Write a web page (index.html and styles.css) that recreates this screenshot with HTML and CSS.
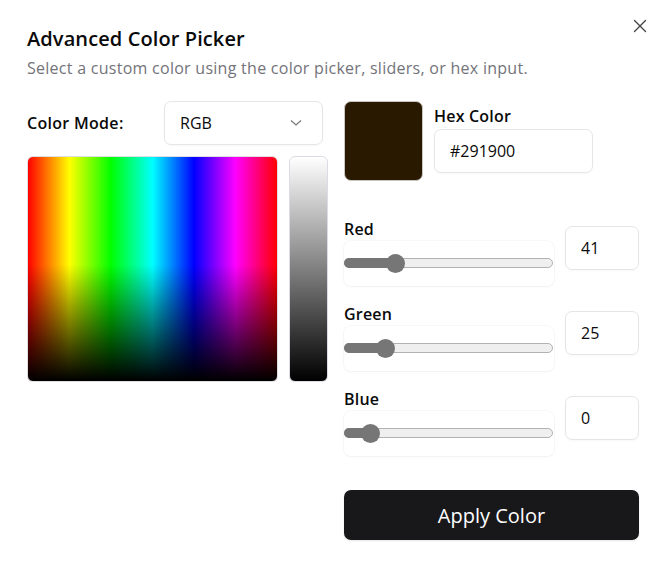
FILE: index.html
```html
<!DOCTYPE html>
<html>
<head>
<meta charset="utf-8">
<link rel="stylesheet" href="styles.css">
</head>
<body>
<div class="dialog">
  <button class="close" aria-label="Close">
    <svg width="14" height="14" viewBox="0 0 14 14"><path d="M1.5 1.5 L12.5 12.5 M12.5 1.5 L1.5 12.5" stroke="#444" stroke-width="1.4" fill="none" stroke-linecap="round"/></svg>
  </button>
  <h1 class="title">Advanced Color Picker</h1>
  <p class="subtitle">Select a custom color using the color picker, sliders, or hex input.</p>
  <div class="main">
    <div class="left">
      <div class="mode-row">
        <span class="mode-label">Color Mode:</span>
        <div class="select">
          <span>RGB</span>
          <svg width="12" height="8" viewBox="0 0 12 8"><path d="M1 1.5 L6 6 L11 1.5" stroke="#777" stroke-width="1.2" fill="none"/></svg>
        </div>
      </div>
      <div class="canvas-row">
        <div class="spectrum"></div>
        <div class="gray-bar"></div>
      </div>
    </div>
    <div class="right">
      <div class="top-row">
        <div class="swatch"></div>
        <div class="hex-block">
          <div class="label">Hex Color</div>
          <div class="input hex-input">#291900</div>
        </div>
      </div>
      <div class="channels">
        <div class="channel">
          <div class="channel-left">
            <div class="label">Red</div>
            <div class="slider"><div class="track"><div class="fill" style="width:50px"></div><div class="thumb" style="left:50px"></div></div></div>
          </div>
          <div class="input num-input">41</div>
        </div>
        <div class="channel">
          <div class="channel-left">
            <div class="label">Green</div>
            <div class="slider"><div class="track"><div class="fill" style="width:40px"></div><div class="thumb" style="left:40px"></div></div></div>
          </div>
          <div class="input num-input">25</div>
        </div>
        <div class="channel">
          <div class="channel-left">
            <div class="label">Blue</div>
            <div class="slider"><div class="track"><div class="fill" style="width:25px"></div><div class="thumb" style="left:25px"></div></div></div>
          </div>
          <div class="input num-input">0</div>
        </div>
      </div>
      <button class="apply">Apply Color</button>
    </div>
  </div>
</div>
</body>
</html>
```
FILE: styles.css
```css
* { box-sizing: border-box; }
html, body { margin: 0; padding: 0; background: #fff; }
body {
  font-family: "Open Sans", "Noto Sans", sans-serif;
  color: #0a0a0a;
  width: 662px;
  height: 562px;
  overflow: hidden;
}
.dialog {
  position: relative;
  padding: 24px 23px 0 27px;
}
.close {
  position: absolute;
  top: 18px;
  right: 14px;
  width: 16px;
  height: 16px;
  padding: 1px;
  border: 0;
  background: transparent;
  display: flex;
}
.title {
  margin: 0;
  font-size: 20px;
  font-weight: 600;
  line-height: 29px;
  letter-spacing: 0.1px;
}
.subtitle {
  margin: 4px 0 0 0;
  font-size: 16px;
  line-height: 22px;
  color: #73737a;
  letter-spacing: 0.27px;
}
.main {
  display: grid;
  grid-template-columns: 301px 295px;
  column-gap: 16px;
  margin-top: 22px;
}
.left { display: flex; flex-direction: column; gap: 11px; }
.mode-row { display: flex; align-items: center; }
.mode-label {
  width: 137px;
  font-size: 16px;
  font-weight: 600;
  letter-spacing: 0.3px;
}
.select {
  width: 159px;
  height: 44px;
  border: 1px solid #e6e6e9;
  border-radius: 7px;
  display: flex;
  align-items: center;
  justify-content: space-between;
  padding: 0 20px 0 15px;
  font-size: 16px;
  box-shadow: 0 1px 2px rgba(0,0,0,0.03);
}
.canvas-row { display: flex; gap: 11px; height: 226px; }
.spectrum {
  width: 251px;
  height: 226px;
  border-radius: 6px;
  border: 1px solid #dedee3;
  background:
    linear-gradient(to bottom, rgba(0,0,0,0) 0%, rgba(0,0,0,0) 48%, #000 100%),
    linear-gradient(to right, #f00 0%, #ff0 16.67%, #0f0 33.33%, #0ff 50%, #00f 66.67%, #f0f 83.33%, #f00 100%);
}
.gray-bar {
  width: 39px;
  height: 226px;
  border-radius: 6px;
  border: 1px solid #dcdce4;
  background: linear-gradient(to bottom, #fff, #000);
}
.right { display: flex; flex-direction: column; }
.top-row { display: flex; gap: 11px; }
.swatch {
  width: 79px;
  height: 80px;
  border-radius: 7px;
  background: #291900;
  border: 1px solid #c9c6c2;
}
.hex-block { display: flex; flex-direction: column; padding-top: 4px; }
.label {
  font-size: 16px;
  font-weight: 600;
  line-height: 22px;
  letter-spacing: 0.2px;
}
.hex-block .label { margin-bottom: 2px; }
.input {
  height: 44px;
  border: 1px solid #e6e6e9;
  border-radius: 7px;
  display: flex;
  align-items: center;
  padding: 0 15px;
  font-size: 16px;
  box-shadow: 0 1px 2px rgba(0,0,0,0.03);
}
.hex-input { width: 159px; }
.channels { display: flex; flex-direction: column; gap: 17px; margin-top: 37px; }
.channel { display: flex; gap: 11px; align-items: flex-start; }
.channel-left { width: 210px; display: flex; flex-direction: column; gap: 1px; }
.num-input { width: 74px; margin-top: 8px; }
.slider {
  height: 45px;
  border-radius: 7px;
  background: #fff;
  box-shadow: 0 0 0 1px rgba(0,0,0,0.025), 0 1px 3px rgba(0,0,0,0.04);
  padding: 17px 1px 0 0;
}
.track {
  position: relative;
  height: 10px;
  border-radius: 5px;
  background: #efefef;
  border: 1px solid #b2b2b2;
}
.fill {
  position: absolute;
  left: -1px;
  top: -1px;
  bottom: -1px;
  background: #767676;
  border-radius: 5px 0 0 5px;
}
.thumb {
  position: absolute;
  top: 50%;
  width: 19px;
  height: 19px;
  margin-left: -9.5px;
  margin-top: -9.5px;
  border-radius: 50%;
  background: #767676;
}
.apply {
  margin-top: 34px;
  height: 50px;
  width: 295px;
  border: 0;
  border-radius: 7px;
  background: #18181b;
  color: #fff;
  font-family: "Open Sans", "Noto Sans", sans-serif;
  font-size: 20px;
  box-shadow: 0 1px 2px rgba(0,0,0,0.1);
}
```
